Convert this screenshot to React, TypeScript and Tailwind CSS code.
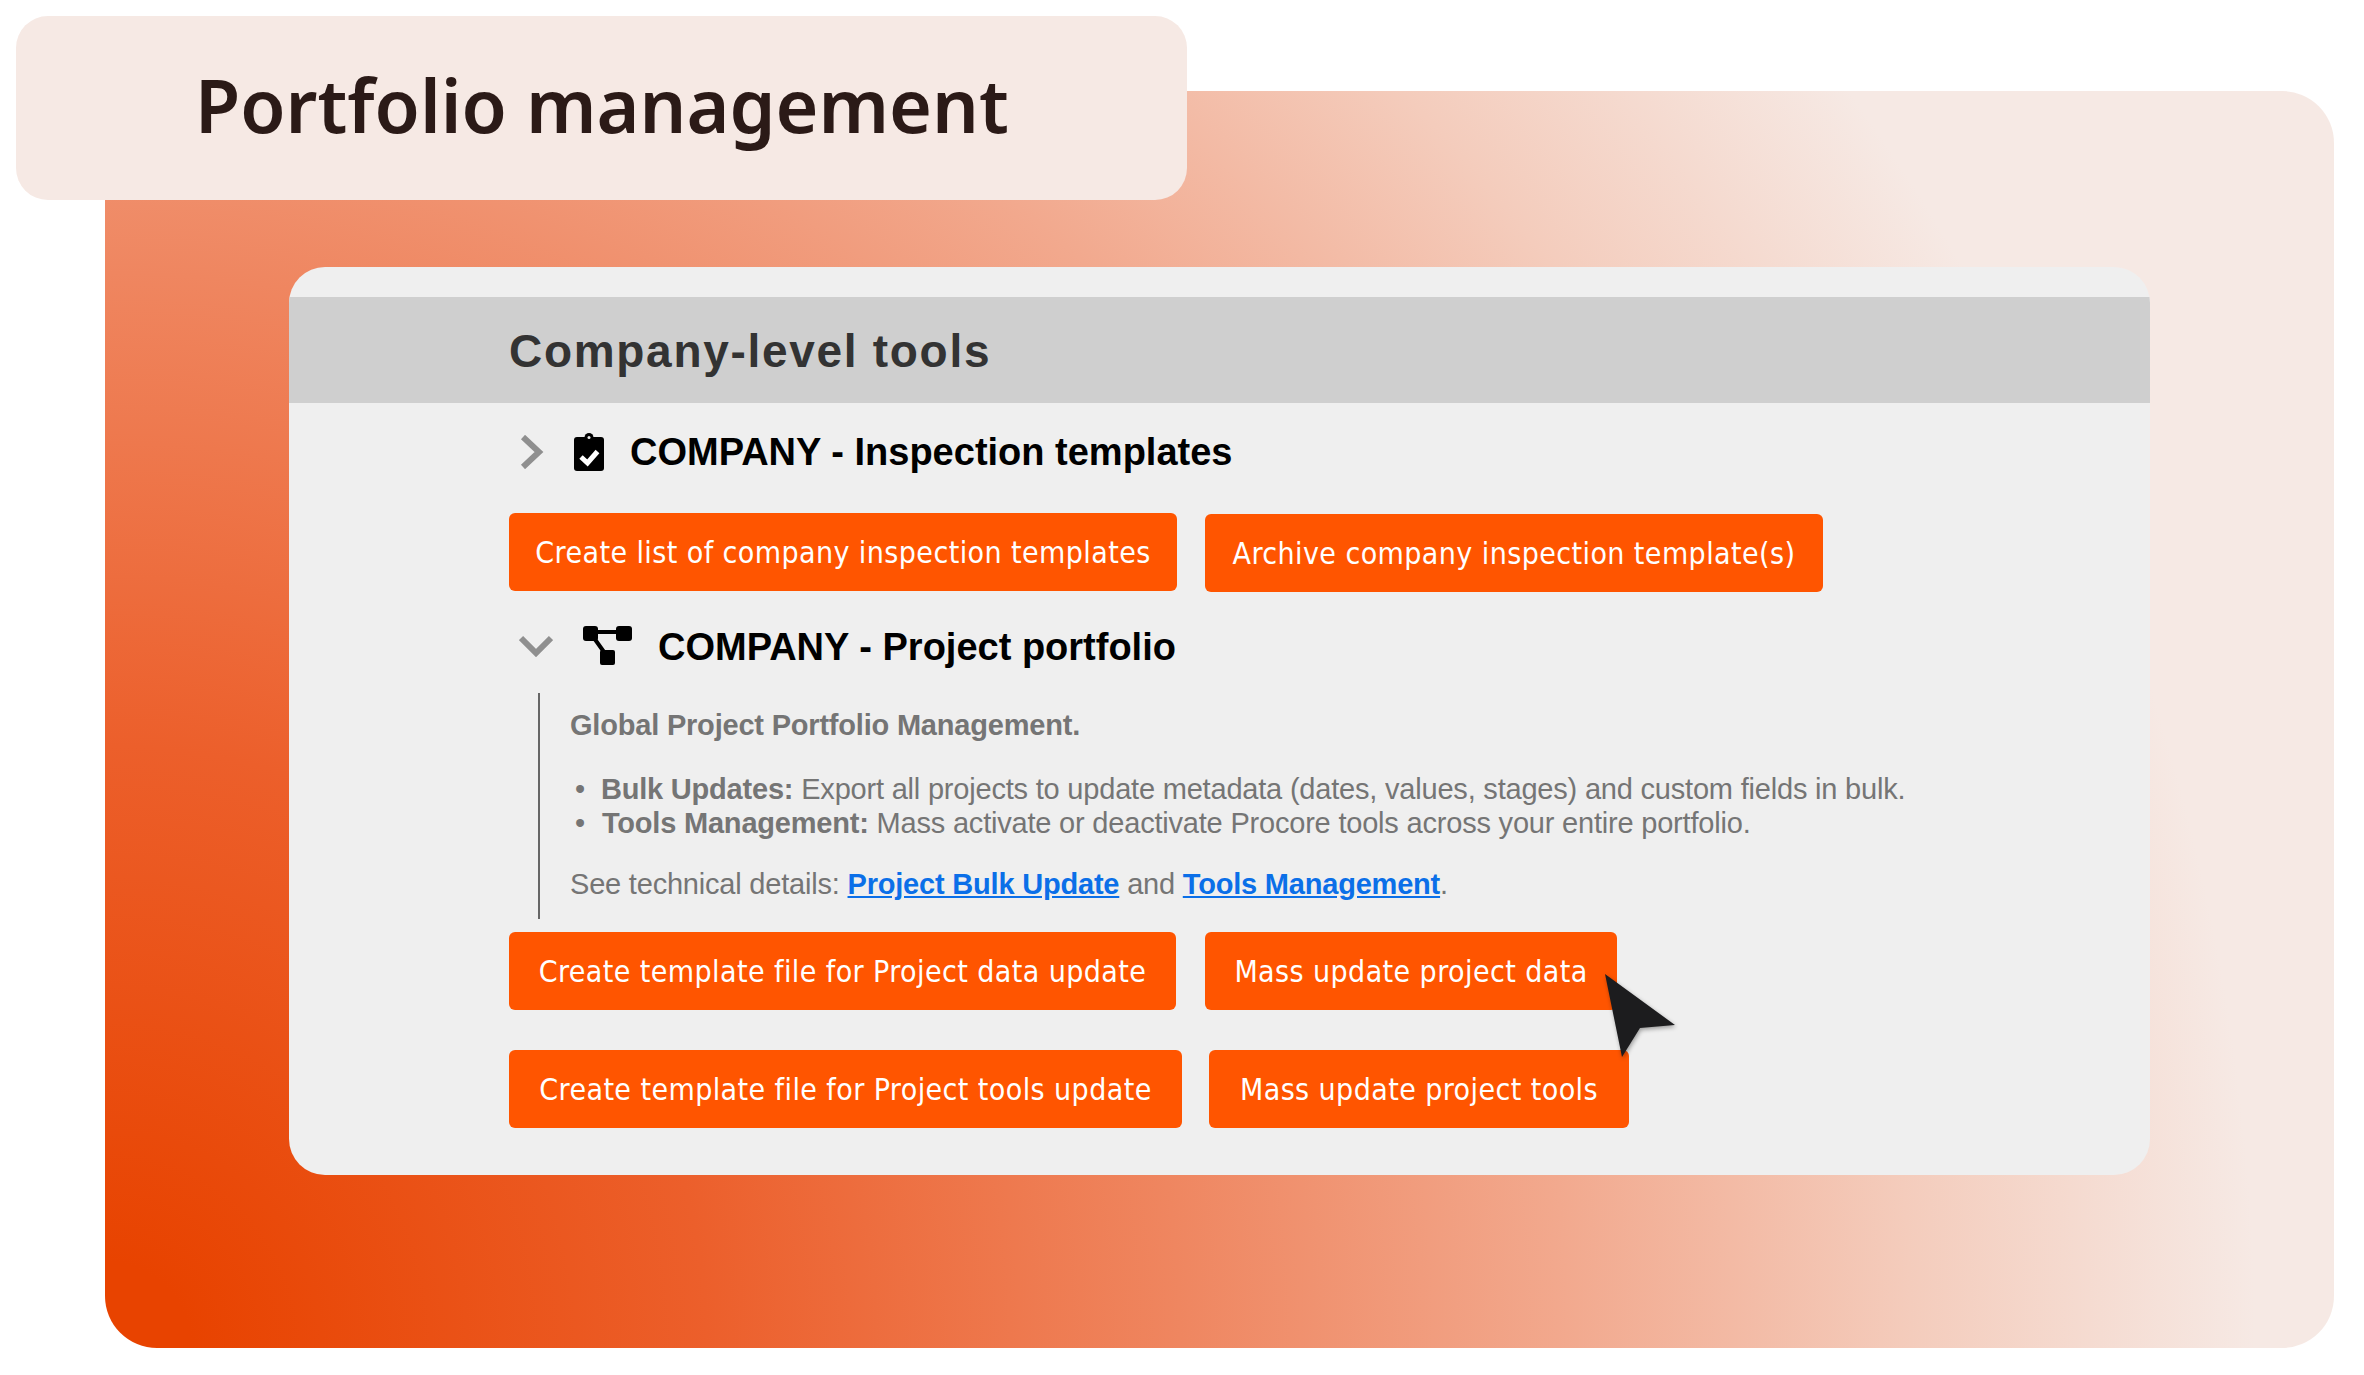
import React from "react";

function OrangeButton({ label, className = "" }: { label: string; className?: string }) {
  return (
    <button className={`h-[78px] rounded-[6px] bg-[#ff5500] text-white text-[30px] tracking-[0.42px] whitespace-nowrap font-['DejaVu_Sans_Condensed','DejaVu_Sans',sans-serif] ${className}`}>
      {label}
    </button>
  );
}

function ClipboardIcon() {
  return (
    <svg width="30" height="38" viewBox="0 0 30 38">
      <rect x="0" y="4" width="30" height="34" rx="3" fill="#000" />
      <circle cx="15" cy="4.5" r="4.5" fill="#000" />
      <circle cx="15" cy="4.5" r="1.5" fill="#efefef" />
      <path d="M7 24l6.5 6L23.5 18.5" fill="none" stroke="#fff" strokeWidth="5" />
    </svg>
  );
}

function TreeIcon() {
  return (
    <svg width="49" height="39" viewBox="0 0 49 39" className="mb-[3px]">
      <rect x="0" y="0" width="15" height="15" rx="3" fill="#000" />
      <rect x="33" y="0" width="16" height="15" rx="3" fill="#000" />
      <rect x="17" y="24" width="15" height="15" rx="2" fill="#000" />
      <path d="M12 6h24M11 12l10 14" stroke="#000" strokeWidth="4" fill="none" />
    </svg>
  );
}

export default function App() {
  return (
    <div className="relative w-[2364px] h-[1375px] bg-white pt-[91px] pl-[105px] overflow-hidden">
      <div className="absolute left-[16px] top-[16px] w-[1171px] h-[184px] rounded-[32px] bg-[#f6e9e4] flex items-center pl-[179px] pb-[6px]">
        <h1 className="text-[73.5px] font-semibold text-[#2b1a17] whitespace-nowrap font-['Noto_Sans',sans-serif]">Portfolio management</h1>
      </div>

      <div className="w-[2229px] h-[1257px] rounded-[52px] pt-[176px] pl-[184px] bg-[radial-gradient(circle_2150px_at_0%_100%,#e84300_0%,#e84300_4%,#ec5f2b_28%,#ef8660_50%,#f2a98e_68%,#f4ccbc_84%,#f6e9e4_100%)]">
        <div className="w-[1861px] h-[908px] rounded-[36px] bg-[#efefef] pt-[30px] overflow-hidden font-['Liberation_Sans',sans-serif]">
          <div className="h-[106px] bg-[#cfcfcf] flex items-center pl-[220px] pt-[2px]">
            <h2 className="text-[46px] font-bold text-[#333333] tracking-[1.7px]">Company-level tools</h2>
          </div>

          <div className="pl-[220px]">
            <div className="mt-[24px] h-[50px] flex items-center">
              <svg width="24" height="34" viewBox="0 0 24 34" className="ml-[11px]">
                <path d="M3 2l16 15L3 32" fill="none" stroke="#8f8f8f" strokeWidth="6" />
              </svg>
              <div className="ml-[30px] flex"><ClipboardIcon /></div>
              <span className="ml-[26px] text-[38px] font-bold text-black">COMPANY - Inspection templates</span>
            </div>

            <div className="mt-[36px] h-[80px] flex items-start gap-[28px]">
              <OrangeButton label="Create list of company inspection templates" className="w-[668px]" />
              <OrangeButton label="Archive company inspection template(s)" className="w-[618px] mt-[1px]" />
            </div>

            <div className="mt-[29px] h-[50px] flex items-center">
              <svg width="34" height="22" viewBox="0 0 34 22" className="ml-[10px] mb-[3px]">
                <path d="M2 3l15 15L32 3" fill="none" stroke="#8f8f8f" strokeWidth="6" />
              </svg>
              <div className="ml-[30px] flex"><TreeIcon /></div>
              <span className="ml-[26px] text-[38px] font-bold text-black">COMPANY - Project portfolio</span>
            </div>

            <div className="mt-[21px] ml-[29px] h-[226px] border-l-2 border-[#666666] pl-[30px] text-[29px] text-[#757575] tracking-[-0.2px]">
              <p className="pt-[11px] h-[64px] font-bold">Global Project Portfolio Management.</p>
              <ul className="mt-[16px]">
                <li className="h-[34px] flex items-center whitespace-nowrap">
                  <span className="ml-[5px] mr-[16px]">•</span>
                  <span><b>Bulk Updates:</b> Export all projects to update metadata (dates, values, stages) and custom fields in bulk.</span>
                </li>
                <li className="h-[34px] flex items-center whitespace-nowrap">
                  <span className="ml-[5px] mr-[17px]">•</span>
                  <span><b>Tools Management:</b> Mass activate or deactivate Procore tools across your entire portfolio.</span>
                </li>
              </ul>
              <p className="mt-[22px] whitespace-nowrap">
                See technical details: <a href="#" className="font-bold text-[#0b6fe8] underline">Project Bulk Update</a> and <a href="#" className="font-bold text-[#0b6fe8] underline">Tools Management</a>.
              </p>
            </div>

            <div className="mt-[13px] flex gap-[29px]">
              <OrangeButton label="Create template file for Project data update" className="w-[667px]" />
              <OrangeButton label="Mass update project data" className="w-[412px]" />
            </div>
            <div className="mt-[40px] flex gap-[27px]">
              <OrangeButton label="Create template file for Project tools update" className="w-[673px]" />
              <OrangeButton label="Mass update project tools" className="w-[420px]" />
            </div>
          </div>
        </div>
      </div>

      <svg width="74" height="86" viewBox="0 0 74 86" className="absolute left-[1604px] top-[973px] drop-shadow-[1px_2px_2px_rgba(0,0,0,0.35)]">
        <path d="M1 1l70 51-35 3-18 29z" fill="#1c1c1e" />
      </svg>
    </div>
  );
}
